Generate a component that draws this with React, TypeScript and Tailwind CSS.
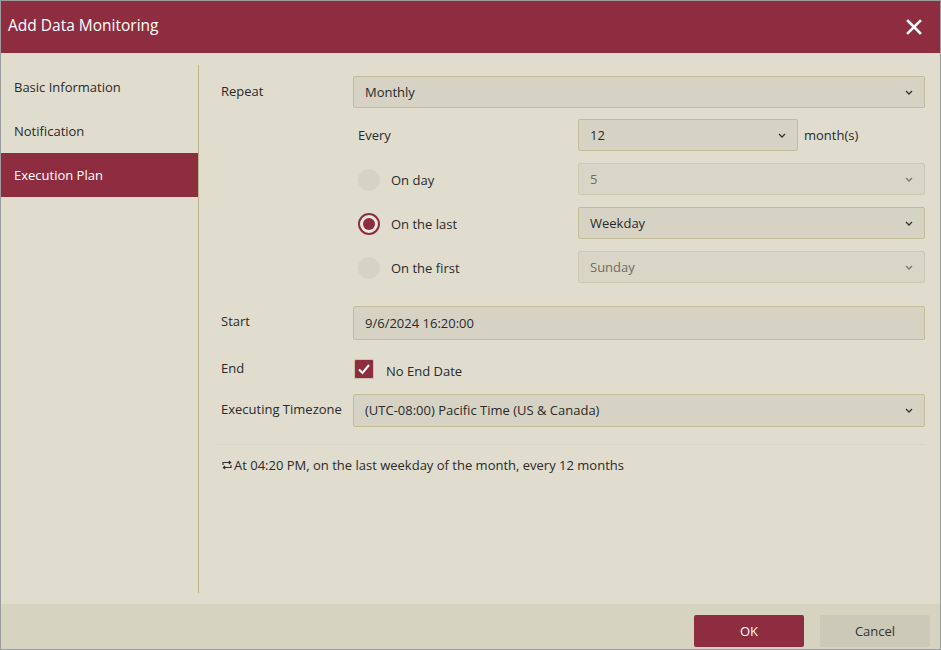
import React from "react";

const Chevron = ({ muted }: { muted?: boolean }) => (
  <svg width="8" height="5" viewBox="0 0 8 5" className="shrink-0">
    <path d="M1 1 L4 4 L7 1" fill="none" stroke={muted ? "#777" : "#333"} strokeWidth="1.3" />
  </svg>
);

const Select = ({
  value,
  muted,
  className,
}: {
  value: string;
  muted?: boolean;
  className?: string;
}) => (
  <div
    className={
      "flex h-[32px] items-center justify-between rounded-[2px] border pl-[11px] pr-[11px] " +
      (muted
        ? "border-[#cdc8b0] bg-[#d9d6c7] text-[#6e6b63] "
        : "border-[#c2bc97] bg-[#d6d3c4] text-[#2a2a2a] ") +
      (className ?? "")
    }
  >
    <span className="pt-[2px]">{value}</span>
    <Chevron muted={muted} />
  </div>
);

const Radio = ({ checked }: { checked?: boolean }) =>
  checked ? (
    <div className="flex h-[22px] w-[22px] shrink-0 items-center justify-center rounded-full border-[2px] border-[#8f2d40] bg-[#ece8dc]">
      <div className="h-[12px] w-[12px] rounded-full bg-[#8f2d40]" />
    </div>
  ) : (
    <div className="h-[22px] w-[22px] shrink-0 rounded-full bg-[#d6d3c4]" />
  );

export default function App() {
  return (
    <div
      className="flex h-[650px] w-[941px] flex-col border border-[#9c9c9c] bg-[#e0ddcf] text-[13px] text-[#2a2a2a]"
      style={{ fontFamily: '"Open Sans", "Noto Sans", sans-serif' }}
    >
      {/* Header */}
      <div className="flex h-[52px] shrink-0 items-center justify-between bg-[#8f2d40] pb-[3px] pl-[7px] pr-[18px]">
        <span className="text-[15.5px] text-white">Add Data Monitoring</span>
        <svg width="16" height="16" viewBox="0 0 16 16" className="mt-[3px]">
          <path d="M2 2 L14 14 M14 2 L2 14" stroke="#fff" strokeWidth="2.6" strokeLinecap="square" />
        </svg>
      </div>

      {/* Body */}
      <div className="flex min-h-0 flex-1 pt-[12px] pb-[11px]">
        {/* Sidebar */}
        <div className="flex w-[198px] shrink-0 flex-col border-r border-[#bcb58c]">
          <div className="flex h-[44px] items-center pl-[13px] pt-[2px]">Basic Information</div>
          <div className="flex h-[44px] items-center pl-[13px] pt-[2px]">Notification</div>
          <div className="flex h-[44px] items-center bg-[#8f2d40] pl-[13px] pt-[2px] text-white">Execution Plan</div>
        </div>

        {/* Main */}
        <div className="flex flex-1 flex-col pl-[22px] pr-[15px] pt-[11px]">
          {/* Repeat */}
          <div className="flex">
            <div className="w-[132px] shrink-0 pt-[6px]">Repeat</div>
            <Select value="Monthly" className="flex-1" />
          </div>

          {/* Nested monthly options */}
          <div className="ml-[137px] mt-[11px] flex flex-col gap-[12px]">
            <div className="flex items-center">
              <div className="w-[220px] shrink-0 pt-[2px]">Every</div>
              <Select value="12" className="w-[220px]" />
              <span className="ml-[6px] pt-[2px]">month(s)</span>
            </div>
            <div className="flex items-center">
              <div className="flex w-[220px] shrink-0 items-center gap-[11px] pt-[2px]">
                <Radio />
                <span className="pt-[2px]">On day</span>
              </div>
              <Select value="5" muted className="flex-1" />
            </div>
            <div className="flex items-center">
              <div className="flex w-[220px] shrink-0 items-center gap-[11px] pt-[2px]">
                <Radio checked />
                <span className="pt-[2px]">On the last</span>
              </div>
              <Select value="Weekday" className="flex-1" />
            </div>
            <div className="flex items-center">
              <div className="flex w-[220px] shrink-0 items-center gap-[11px] pt-[2px]">
                <Radio />
                <span className="pt-[2px]">On the first</span>
              </div>
              <Select value="Sunday" muted className="flex-1" />
            </div>
          </div>

          {/* Start */}
          <div className="mt-[23px] flex">
            <div className="w-[132px] shrink-0 pt-[6px]">Start</div>
            <div className="flex h-[34px] flex-1 items-center rounded-[2px] border border-[#c2bc97] bg-[#d6d3c4] pl-[11px] pt-[2px]">
              9/6/2024 16:20:00
            </div>
          </div>

          {/* End */}
          <div className="mt-[19px] flex items-start">
            <div className="w-[132px] shrink-0 pt-[0px]">End</div>
            <div className="flex items-start gap-[12px]">
              <div className="ml-[1px] flex h-[20px] w-[20px] items-center justify-center rounded-[2px] border border-[#c9c3a9] bg-[#8f2d40]">
                <svg width="14" height="12" viewBox="0 0 14 12">
                  <path d="M2 6.5 L5.5 10 L12 2" fill="none" stroke="#fff" strokeWidth="2" />
                </svg>
              </div>
              <span className="mt-[3px]">No End Date</span>
            </div>
          </div>

          {/* Timezone */}
          <div className="mt-[12px] flex">
            <div className="w-[132px] shrink-0 pt-[6px]">Executing Timezone</div>
            <Select value="(UTC-08:00) Pacific Time (US & Canada)" className="h-[33px] flex-1" />
          </div>

          {/* Divider */}
          <div className="ml-[-6px] mt-[17px] h-px bg-[#d8d5c6]" />

          {/* Summary */}
          <div className="mt-[10px] flex items-center gap-[2px] pl-[1px]">
            <svg width="10" height="10" viewBox="0 0 10 10">
              <path d="M1 5 V2.5 H8.5 M6.8 1 L8.6 2.5 L6.8 4 M9 5 V7.5 H1.5 M3.2 6 L1.4 7.5 L3.2 9" fill="none" stroke="#333" strokeWidth="1.2" />
            </svg>
            <span className="pt-[1px]">At 04:20 PM, on the last weekday of the month, every 12 months</span>
          </div>
        </div>
      </div>

      {/* Footer */}
      <div className="flex h-[45px] shrink-0 items-start justify-end gap-[16px] bg-[#d6d3c1] pr-[10px] pt-[11px]">
        <button className="h-[32px] w-[110px] rounded-[2px] bg-[#8f2d40] pt-[1px] text-white">OK</button>
        <button className="h-[32px] w-[110px] rounded-[2px] bg-[#cdc9b8] pt-[1px] text-[#333]">Cancel</button>
      </div>
    </div>
  );
}
